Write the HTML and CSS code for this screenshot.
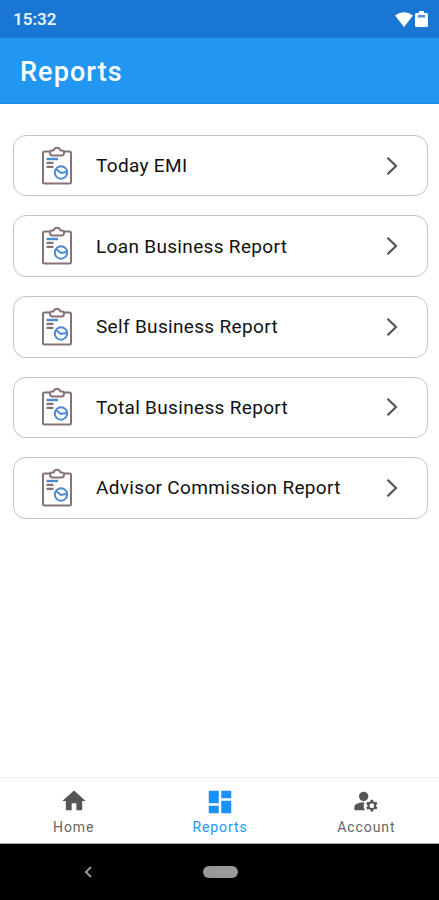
FILE: index.html
```html
<!DOCTYPE html>
<html lang="en">
<head>
  <meta charset="UTF-8">
  <meta name="viewport" content="width=device-width, initial-scale=1.0">
  <title>Reports</title>
  <link rel="stylesheet" href="styles.css">
</head>
<body>
  <svg class="sprite" width="0" height="0">
    <symbol id="clipboard" viewBox="0 0 32 40">
      <g fill="none" stroke="#86737a" stroke-width="2" stroke-linejoin="round">
        <path d="M9 5.500H3.500Q2 5.500 2 7V36Q2 37.500 3.500 37.500H28.500Q30 37.500 30 36V7Q30 5.500 28.500 5.500H23"/>
        <path d="M9 6.500Q9 4.500 11 4.500H12.500Q13.500 1.800 16 1.800T19.500 4.500H21Q23 4.500 23 6.500Q23 9.500 20.500 9.500H11.500Q9 9.500 9 6.500Z"/>
      </g>
      <path d="M5.500 13H17" stroke="#4b8ad0" stroke-width="2.400"/>
      <path d="M5.500 16.800H12.500M5.500 20.800H12.500" stroke="#86737a" stroke-width="2.200"/>
      <g fill="none" stroke="#4b8ad0" stroke-width="2">
        <circle cx="20" cy="26.500" r="6.200"/>
        <path d="M15.500 23.500L20 27L25.500 26"/>
      </g>
    </symbol>
    <symbol id="arrow" viewBox="0 0 12 20">
      <path d="M1.500 1.800L10 10L1.500 18.200" fill="none" stroke="#555" stroke-width="2.200"/>
    </symbol>
  </svg>

  <div class="status-bar">
    <span>15:32</span>
    <div class="status-icons">
      <svg width="18" height="15" viewBox="0 0 18 15"><path d="M0 3.500Q9-3 18 3.500L9 15Z" fill="#fff"/></svg>
      <svg width="13" height="16" viewBox="0 0 13 16"><path d="M4 0H9V2H11.500Q13 2 13 3.500V14.500Q13 16 11.500 16H1.500Q0 16 0 14.500V3.500Q0 2 1.500 2H4Z" fill="#fff"/><path d="M3 4H10V6.500H3Z" fill="#4a90d9"/></svg>
    </div>
  </div>

  <header class="app-bar">
    <h1>Reports</h1>
  </header>

  <main class="report-list">
    <a class="report-card">
      <svg class="report-icon"><use href="#clipboard"/></svg>
      <span>Today EMI</span>
      <svg class="arrow"><use href="#arrow"/></svg>
    </a>
    <a class="report-card">
      <svg class="report-icon"><use href="#clipboard"/></svg>
      <span>Loan Business Report</span>
      <svg class="arrow"><use href="#arrow"/></svg>
    </a>
    <a class="report-card">
      <svg class="report-icon"><use href="#clipboard"/></svg>
      <span>Self Business Report</span>
      <svg class="arrow"><use href="#arrow"/></svg>
    </a>
    <a class="report-card">
      <svg class="report-icon"><use href="#clipboard"/></svg>
      <span>Total Business Report</span>
      <svg class="arrow"><use href="#arrow"/></svg>
    </a>
    <a class="report-card">
      <svg class="report-icon"><use href="#clipboard"/></svg>
      <span>Advisor Commission Report</span>
      <svg class="arrow"><use href="#arrow"/></svg>
    </a>
  </main>

  <nav class="bottom-nav">
    <a class="nav-item">
      <svg viewBox="0 0 24 24"><path d="M10 20v-6h4v6h5v-8h3L12 3 2 12h3v8z"/></svg>
      <span>Home</span>
    </a>
    <a class="nav-item active">
      <svg viewBox="0 0 24 24"><path d="M3 13h8V3H3v10zm0 8h8v-6H3v6zm10 0h8V11h-8v10zm0-18v6h8V3h-8z"/></svg>
      <span>Reports</span>
    </a>
    <a class="nav-item">
      <svg viewBox="0 0 24 24">
        <circle cx="10" cy="8" r="4"/>
        <path d="M10.670 13.020C10.450 13.010 10.230 13 10 13c-2.420 0-4.680.670-6.610 1.820C2.510 15.340 2 16.320 2 17.350V20h9.260C10.470 18.870 10 17.490 10 16c0-1.070.250-2.070.670-2.980z"/>
        <path d="M20.750 16c0-.220-.030-.420-.060-.630l1.140-1.010-1-1.730-1.450.490c-.320-.270-.680-.480-1.080-.630L18 11h-2l-.300 1.490c-.400.150-.760.360-1.080.630l-1.450-.490-1 1.730 1.140 1.010c-.030.210-.060.410-.060.630s.030.420.060.630l-1.140 1.010 1 1.730 1.450-.490c.320.270.680.480 1.080.630L16 21h2l.300-1.490c.400-.150.760-.360 1.080-.630l1.450.490 1-1.730-1.140-1.010c.030-.210.060-.410.060-.630zM17 18c-1.100 0-2-.900-2-2s.900-2 2-2 2 .900 2 2-.900 2-2 2z"/>
      </svg>
      <span>Account</span>
    </a>
  </nav>

  <div class="system-bar">
    <svg class="back" viewBox="0 0 8 12"><path d="M7 1L2 6L7 11" fill="none" stroke="#999" stroke-width="2"/></svg>
    <div class="home-pill"></div>
  </div>
</body>
</html>
```

FILE: styles.css
```css
* { box-sizing: border-box; margin: 0; padding: 0; }

body {
  font-family: Roboto, sans-serif;
  height: 100vh;
  display: flex;
  flex-direction: column;
  background: #fff;
  color: #111;
  overflow: hidden;
}

.sprite {
  position: absolute;
}

.status-bar {
  height: 38px;
  padding: 0 11px 0 13px;
  display: flex;
  align-items: center;
  justify-content: space-between;
  background: #1976d2;
  color: #e8f2fc;
  font-size: 17px;
  font-weight: 600;
}

.status-icons {
  display: flex;
  align-items: center;
  gap: 2px;
}

.app-bar {
  height: 66px;
  padding: 3px 20px 0;
  display: flex;
  align-items: center;
  background: #2196f3;
  border-bottom: 1px solid #1689e8;
  color: #fff;
}

.app-bar h1 {
  font-size: 27px;
  font-weight: 500;
  letter-spacing: 1.1px;
}

.report-list {
  flex: 1;
  padding: 30.800px 11.500px 0 12.500px;
  display: flex;
  flex-direction: column;
  gap: 19px;
}

.report-card {
  height: 61.600px;
  padding: 0 29px 0 27.500px;
  display: flex;
  align-items: center;
  border: 1.500px solid #c4c4c4;
  border-radius: 13px;
  font-size: 19px;
  letter-spacing: 0.330px;
}

.report-icon {
  width: 32px;
  height: 40px;
  margin-right: 23px;
}

.arrow {
  width: 12px;
  height: 20px;
  margin-left: auto;
}

.bottom-nav {
  height: 67px;
  display: flex;
  border-top: 1px solid #f0f0f0;
  border-bottom: 1px solid #aaa;
}

.nav-item {
  flex: 1;
  padding: 9px 0 0 1px;
  display: flex;
  flex-direction: column;
  align-items: center;
  color: #666;
  font-size: 14px;
  letter-spacing: 0.9px;
}

.nav-item svg {
  width: 28px;
  height: 28px;
  fill: #555;
}

.nav-item span {
  margin-top: 4px;
}

.nav-item.active {
  color: #2196f3;
}

.nav-item.active svg {
  width: 30px;
  height: 30px;
  fill: #1a8ff5;
}

.nav-item.active span {
  margin-top: 2px;
}

.system-bar {
  height: 56px;
  padding-left: 84px;
  display: flex;
  align-items: center;
  background: #000;
}

.back {
  width: 8px;
  height: 12px;
}

.home-pill {
  width: 35px;
  height: 12px;
  margin-left: 111px;
  border-radius: 6px;
  background: #999;
}
```
